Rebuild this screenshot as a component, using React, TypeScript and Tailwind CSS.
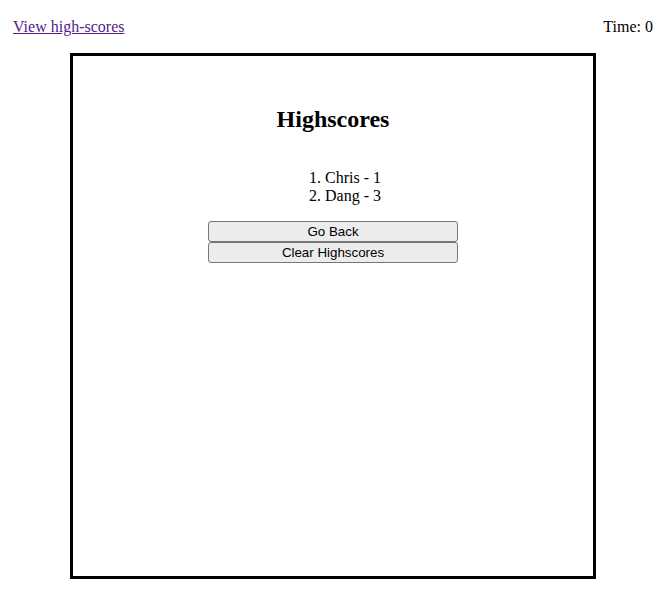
const scores = [
  { name: "Chris", score: 1 },
  { name: "Dang", score: 3 },
];

const App = () => {
  return (
    <main className="min-h-screen bg-white font-['Liberation_Serif',serif] text-base text-black">
      <header className="flex items-center justify-between pl-[13px] pr-[14px] pt-[18px] leading-[18px]">
        <a href="#" className="text-[#551a8b] underline">
          View high-scores
        </a>
        <span>Time: 0</span>
      </header>
      <section className="ml-[70px] mt-[17px] flex h-[526px] w-[526px] flex-col items-center border-[3px] border-black pt-[49px]">
        <h2 className="text-[24px] font-bold leading-[28px]">Highscores</h2>
        <ol className="mt-[36px] flex flex-col items-center pl-[24px] leading-[18px]">
          {scores.map((s, i) => (
            <li key={s.name}>
              {i + 1}. {s.name} - {s.score}
            </li>
          ))}
        </ol>
        <div className="mt-[16px] flex w-[250px] flex-col">
          <button className="h-[21px] rounded-[3px] border border-[#767676] bg-[#ececec] font-['Liberation_Sans',sans-serif] text-[13.33px] leading-none">
            Go Back
          </button>
          <button className="h-[21px] rounded-[3px] border border-[#767676] bg-[#ececec] font-['Liberation_Sans',sans-serif] text-[13.33px] leading-none">
            Clear Highscores
          </button>
        </div>
      </section>
    </main>
  );
};

export default App;
